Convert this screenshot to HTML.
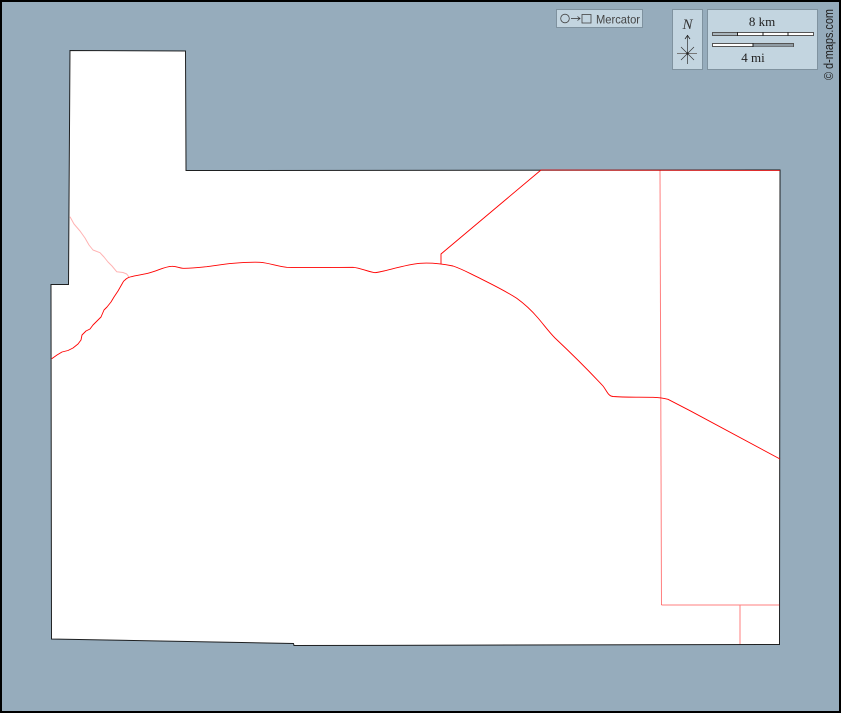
<!DOCTYPE html>
<html>
<head>
<meta charset="utf-8">
<style>
html,body{margin:0;padding:0;background:#000;}
svg{display:block;}
</style>
</head>
<body>
<svg xmlns="http://www.w3.org/2000/svg" width="841" height="713" viewBox="0 0 841 713">
<rect x="0" y="0" width="841" height="713" fill="#000"/>
<rect x="2" y="2" width="837" height="709" fill="#96acbc"/>
<path d="M70 50.5L185.5 51L186 170.5L780 170L779.5 644.5L294 645.5L293.5 643.5L51.5 639L51 284.5L68.5 284.5Z" fill="#fff" stroke="#000" stroke-width="1" stroke-opacity=".85"/>
<g fill="none" stroke="#ff0000" stroke-linejoin="round">
<path stroke-opacity=".3" stroke-width="1" d="M70 216.7L74 224L80 231L85 238L89 245L93 250L100 252.7L104 257L108 262L112 266L116.7 271.7L123 272.5L126.7 274L129 277"/>
<path stroke-width=".9" d="M51.7 358.7L57 355L62 352L68 350.5L73 348L78 344L81 340L82 335L86 331L90 329L93 325L97 321L101 317L104 310L107 307L111 302L114 297L118 291L122 284C123 282 124 280.5 125 280C127 278 128 277.5 130 277C137 275 144 274.5 150 272.7C158 270.5 165 266.5 171.7 266.3C176 266 179 268 183 268.3C192 268.5 199 267.5 206.7 266.7C216 265.5 224 264 233 263.3C243 262.5 252 262 260 262.3C270 263 277 266.5 286.7 267.3C308 268 332 267.3 353 267.3C361 268 367 271.5 375 272.7C385 271.5 405 264.5 420 263.3C432 262.5 443 264 453 266C462 269 469 273 476.7 276.7C490 283.5 504 290 516.7 298.3C526 305 532 311 538 318C544 325 549 332 555 338C572 354 590 372 603 386C607 391 608 396 613 396.5C626 397.5 640 397 653 397.3C658 397.5 663 398 668 399.3L690 410.7L780 459"/>
<path stroke-width=".9" d="M441 264L441 254L541 170"/>
<path stroke-width="1" stroke-opacity=".7" d="M541 170L780 170.5"/>
<path stroke-width="1" stroke-opacity=".5" d="M660 170.5L661.5 605"/>
<path stroke-width="1" stroke-opacity=".5" d="M661.5 605L779.5 605M740 605L740 644"/>
</g>
<!-- Mercator box -->
<rect x="556.5" y="9.5" width="86" height="18" fill="#c3d5e0" stroke="#7f929f"/>
<circle cx="565" cy="18.5" r="4.3" fill="none" stroke="#444" stroke-width=".8"/>
<path d="M571 18.5H580M577.5 16.5L580 18.5L577.5 20.5" fill="none" stroke="#333" stroke-width=".8"/>
<rect x="582" y="14.5" width="9" height="8.5" fill="none" stroke="#444" stroke-width=".8"/>
<text x="596" y="23.5" font-family="'Liberation Sans',sans-serif" font-size="12" fill="#444" textLength="44" lengthAdjust="spacingAndGlyphs">Mercator</text>
<!-- North box -->
<rect x="672.5" y="9.5" width="30" height="60" fill="#c3d5e0" stroke="#7f929f"/>
<text x="687.5" y="29" text-anchor="middle" font-family="'Liberation Serif',serif" font-style="italic" font-size="15" fill="#333">N</text>
<path d="M677 53.5H697" stroke="#777" stroke-width="1"/>
<path d="M687.5 35V64M681 47L694 60M694 47L681 60" stroke="#333" stroke-width=".7" fill="none"/>
<path d="M685 39L687.5 35.5L690 39" stroke="#222" stroke-width=".8" fill="none"/>
<circle cx="687.5" cy="53.5" r="1.2" fill="#222"/>
<!-- Scale box -->
<rect x="707.5" y="9.5" width="110" height="60" fill="#c3d5e0" stroke="#7f929f"/>
<text x="762" y="26" text-anchor="middle" font-family="'Liberation Serif',serif" font-size="13" fill="#222">8 km</text>
<text x="753" y="62" text-anchor="middle" font-family="'Liberation Serif',serif" font-size="13" fill="#222">4 mi</text>
<rect x="712.5" y="32.5" width="101" height="3" fill="#fff" stroke="#555" stroke-width="1"/>
<rect x="713" y="33" width="25" height="2" fill="#aab6bd"/>
<rect x="763" y="33" width="25" height="2" fill="#fff"/>
<rect x="738" y="33" width="25" height="2" fill="#fff"/>
<path d="M737.5 32V36M763 32V36M788 32V36" stroke="#222" stroke-width="1"/>
<rect x="712.5" y="43.5" width="81" height="3" fill="#fff" stroke="#555" stroke-width="1"/>
<rect x="753" y="44" width="40" height="2.5" fill="#8f9ba3"/>
<path d="M753 43V47" stroke="#222" stroke-width="1"/>
<!-- credit -->
<text transform="translate(833,80) rotate(-90)" font-family="'Liberation Sans',sans-serif" font-size="12.5" fill="#222" textLength="71" lengthAdjust="spacingAndGlyphs">© d-maps.com</text>
</svg>
</body>
</html>
